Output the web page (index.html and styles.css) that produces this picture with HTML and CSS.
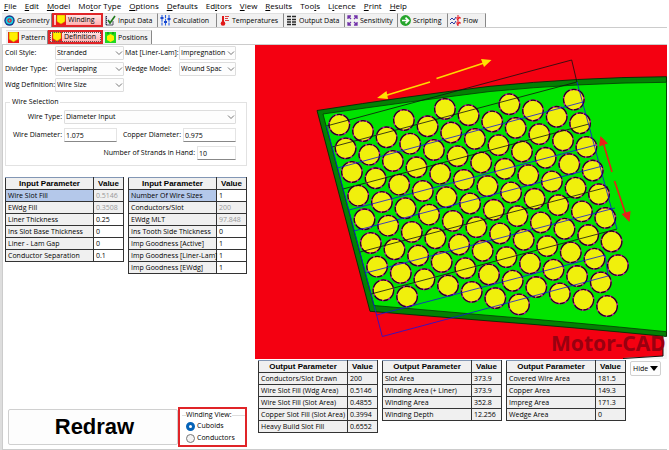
FILE: index.html
```
<!DOCTYPE html>
<html lang="en">
<head>
<meta charset="utf-8">
<title>Motor-CAD</title>
<link rel="stylesheet" href="styles.css">
</head>
<body>
<svg class="defs" aria-hidden="true">
  <defs>
    <symbol id="chevron" viewBox="0 0 8 8"><path d="M1 2.500 4 5.500 7 2.500" fill="none" stroke="#666" stroke-width=".9"/></symbol>
    <symbol id="slot" viewBox="0 0 10 10"><rect width="10" height="10" fill="#f01818"/><path d="M1 0h8v6.500L5 9 1 6.500z" fill="#fff000" stroke="#b89000" stroke-width=".5"/></symbol>
  </defs>
</svg>

<nav class="menu">
  <a href="#"><u>F</u>ile</a>
  <a href="#"><u>E</u>dit</a>
  <a href="#"><u>M</u>odel</a>
  <a href="#">Mo<u>t</u>or Type</a>
  <a href="#"><u>O</u>ptions</a>
  <a href="#"><u>D</u>efaults</a>
  <a href="#">Ed<u>i</u>tors</a>
  <a href="#"><u>V</u>iew</a>
  <a href="#"><u>R</u>esults</a>
  <a href="#">Too<u>l</u>s</a>
  <a href="#">L<u>i</u>cence</a>
  <a href="#"><u>P</u>rint</a>
  <a href="#"><u>H</u>elp</a>
</nav>

<div class="tabs tabs-main" role="tablist">
  <button class="tab" role="tab"><svg viewBox="0 0 11 11"><circle cx="5.500" cy="5.500" r="5.200" fill="#173a8c"/><circle cx="5.500" cy="5.500" r="3.800" fill="#12d8e8"/><circle cx="5.500" cy="5.500" r="2.200" fill="#e02030"/><circle cx="5.500" cy="5.500" r=".9" fill="#12d8e8"/></svg>Geometry</button>
  <button class="tab marked" role="tab" aria-selected="true"><svg><use href="#slot"/></svg>Winding</button>
  <button class="tab" role="tab"><svg viewBox="0 0 11 11"><path d="M1 1v9h7V6" fill="#e8e8f4" stroke="#556" /><path d="M1.500 1v9" stroke="#335" stroke-dasharray="1 1"/><path d="m3 5 2 3 5-7" fill="none" stroke="#207818" stroke-width="1.600"/></svg>Input Data</button>
  <button class="tab" role="tab"><svg viewBox="0 0 11 11"><path d="M2 0v11M5.500 0v11M9 0v11" stroke="#2860e0" stroke-width="1.100" stroke-dasharray="3 .7"/><path d="M.5 3h3M4 7h3M7.500 4h3" stroke="#1848d0" stroke-width="2"/></svg>Calculation</button>
  <button class="tab" role="tab"><svg viewBox="0 0 11 11"><path d="M4 1v7" stroke="#e01818" stroke-width="2"/><circle cx="4" cy="8.500" r="2.300" fill="#e01818"/><path d="M6 1.500h4M6 3.500h3M6 5.500h4" stroke="#e04040"/></svg>Temperatures</button>
  <button class="tab" role="tab"><svg viewBox="0 0 11 11"><path d="M1 1.500h9M1 4.500h9M1 7h9M1 9.500h9" stroke="#282828" stroke-width="1.300" stroke-dasharray="4 1"/></svg>Output Data</button>
  <button class="tab" role="tab"><svg viewBox="0 0 11 11"><path d="M1 4V1h3M7 1h3v3M10 7v3H7M4 10H1V7M1 1l3 3M10 1 7 4M10 10 7 7M1 10l3-3" fill="none" stroke="#7030a8" stroke-width="1.300"/></svg>Sensitivity</button>
  <button class="tab" role="tab"><svg viewBox="0 0 11 11"><circle cx="5.500" cy="5.500" r="5.400" fill="#26a52c"/><path d="M2 5.500h6M5.500 2.600l3 2.900-3 2.900" fill="none" stroke="#fff" stroke-width="1.700"/></svg>Scripting</button>
  <button class="tab" role="tab"><svg viewBox="0 0 11 11"><path d="m0 5 2-2 2 2 2-3M0 9l2-2 2 2 2-3" fill="none" stroke="#2838a0"/><path d="M8 0v11M6 3h5M6 8h5M7 5l3-3M7 10l3-3" stroke="#e82028" stroke-width="1.100"/></svg>Flow</button>
</div>

<div class="page">
  <div class="tabs tabs-sub" role="tablist">
    <button class="tab" role="tab"><svg><use href="#slot"/></svg>Pattern</button>
    <button class="tab marked focus" role="tab" aria-selected="true"><svg><use href="#slot"/></svg>Definition</button>
    <button class="tab" role="tab"><svg viewBox="0 0 11 11"><rect width="11" height="11" fill="#20d820"/><path d="M2 4 5.500 2 9 4v4L5.500 10 2 8z" fill="#fff000"/><path d="M2 1h2M7 1h2" stroke="#087808"/></svg>Positions</button>
  </div>

  <main class="work">
    <section class="side">
      <form class="options">
        <label for="coil">Coil Style:</label>
        <span class="pick"><select id="coil"><option>Stranded</option></select><svg><use href="#chevron"/></svg></span>
        <label for="mat">Mat [Liner-Lam]:</label>
        <span class="pick"><select id="mat"><option>Impregnation</option></select><svg><use href="#chevron"/></svg></span>
        <label for="divider">Divider Type:</label>
        <span class="pick"><select id="divider"><option>Overlapping</option></select><svg><use href="#chevron"/></svg></span>
        <label for="wedge">Wedge Model:</label>
        <span class="pick"><select id="wedge"><option>Wound Spac</option></select><svg><use href="#chevron"/></svg></span>
        <label for="wdg">Wdg Definition:</label>
        <span class="pick"><select id="wdg"><option>Wire Size</option></select><svg><use href="#chevron"/></svg></span>
      </form>

      <fieldset class="wire">
        <legend>Wire Selection</legend>
        <div class="wire-row">
          <label class="lead" for="wtype">Wire Type:</label>
          <span class="pick grow"><select id="wtype"><option>Diameter Input</option></select><svg><use href="#chevron"/></svg></span>
        </div>
        <div class="wire-row">
          <label class="lead" for="wdia">Wire Diameter:</label>
          <input id="wdia" value="1.075">
          <label class="push" for="cdia">Copper Diameter:</label>
          <input id="cdia" value="0.975">
        </div>
        <div class="wire-row">
          <label class="push" for="strands">Number of Strands in Hand:</label>
          <input class="short" id="strands" value="10">
        </div>
      </fieldset>

      <div class="inputs">
        <table>
          <thead><tr><th>Input Parameter</th><th class="val">Value</th></tr></thead>
          <tbody>
            <tr><td class="sel">Wire Slot Fill</td><td class="off">0.5146</td></tr>
            <tr><td>EWdg Fill</td><td class="off">0.3508</td></tr>
            <tr><td>Liner Thickness</td><td class="edit">0.25</td></tr>
            <tr><td>Ins Slot Base Thickness</td><td class="edit">0</td></tr>
            <tr><td>Liner - Lam Gap</td><td class="edit">0</td></tr>
            <tr><td>Conductor Separation</td><td class="edit">0.1</td></tr>
          </tbody>
        </table>
        <table>
          <thead><tr><th>Input Parameter</th><th class="val">Value</th></tr></thead>
          <tbody>
            <tr><td class="sel">Number Of Wire Sizes</td><td class="edit">1</td></tr>
            <tr><td>Conductors/Slot</td><td class="off">200</td></tr>
            <tr><td>EWdg MLT</td><td class="off">97.848</td></tr>
            <tr><td>Ins Tooth Side Thickness</td><td class="edit">0</td></tr>
            <tr><td>Imp Goodness [Active]</td><td class="edit">1</td></tr>
            <tr><td>Imp Goodness [Liner-Lam]</td><td class="edit">1</td></tr>
            <tr><td>Imp Goodness [EWdg]</td><td class="edit">1</td></tr>
          </tbody>
        </table>
      </div>

      <div class="actions">
        <button class="redraw">Redraw</button>
        <div class="view-mark">
          <fieldset class="view">
            <legend>Winding View:</legend>
            <label><input type="radio" name="view" checked>Cuboids</label>
            <label><input type="radio" name="view">Conductors</label>
          </fieldset>
        </div>
      </div>
    </section>

    <section class="result">
      <svg class="drawing" viewBox="255 45 412 314" role="img" aria-label="Slot cross-section">
        <defs>
          <g id="wireEnd">
            <circle r="10.300" fill="#f0f00c" stroke="#c010a0" stroke-width="1.300"/>
            <circle r="10.300" fill="none" stroke="#200818" stroke-width="1.300" stroke-dasharray="9 2 5 1.500"/>
          </g>
          <g id="c7">
            <use href="#wireEnd"/>
            <use href="#wireEnd" x="6.300" y="23.650"/>
            <use href="#wireEnd" x="12.600" y="47.300"/>
            <use href="#wireEnd" x="18.900" y="70.950"/>
            <use href="#wireEnd" x="25.200" y="94.600"/>
            <use href="#wireEnd" x="31.500" y="118.250"/>
            <use href="#wireEnd" x="37.800" y="141.900"/>
          </g>
          <g id="c8"><use href="#c7"/><use href="#wireEnd" x="44.100" y="165.550"/></g>
          <g id="c9"><use href="#c8"/><use href="#wireEnd" x="50.400" y="189.200"/></g>
        </defs>
        <rect x="255" y="45" width="412" height="314" fill="#f40011"/>
        <path d="M663 336h4v23h-44v-1l40-2z" fill="#f4f4f4"/>
        <path d="M317 110.500Q410 96 490 86.300Q577 77.500 666.500 76.700V336.500Q570 327 490 321L370 311.300z" fill="#048004" stroke="#052805" stroke-width=".9"/>
        <path d="M323 114Q410 101.500 490 91.500Q577 83 666.500 82.300V331.700Q570 322 490 315.500L374 305.500z" fill="#00e400" stroke="#053805" stroke-width=".8"/>
        <path d="M663 337v19l-40 2.500" fill="none" stroke="#111"/>
        <use href="#c8" x="339.300" y="124.700"/>
        <use href="#c8" x="363" y="131"/>
        <use href="#c7" x="386.600" y="137.300"/>
        <use href="#c8" x="403.900" y="120"/>
        <use href="#c8" x="427.600" y="126.300"/>
        <use href="#c9" x="444.900" y="108.900"/>
        <use href="#c9" x="468.600" y="115.200"/>
        <use href="#c8" x="492.200" y="121.500"/>
        <use href="#c9" x="509.400" y="104.200"/>
        <use href="#c9" x="533" y="110.500"/>
        <use href="#c9" x="556.700" y="116.800"/>
        <use href="#c8" x="573.800" y="99.600"/>
        <g fill="none" stroke-width=".8">
          <path stroke="#101010" d="M326.500 126 571.700 60l5.200 22L332 147M343 189 589 124M360 252 608 187M371 294 617 229"/>
          <path stroke="#1414e0" d="M337.600 168 583 102M349 210 596 145M354 231 602.700 166M365.500 273 615 208M376.700 315 605 255l3 21L382.300 336.500 326.500 126M577 82 617 229"/>
        </g>
        <g stroke-width="1.600">
          <path d="M430 82 384 96M436.500 78.500 484 63" stroke="#ffd800"/>
          <path d="M377 98 386.500 91 388 99zM491.500 60 481 59l3 8z" fill="#ffe000"/>
          <path d="M612 172 603 142M614.500 181 626 215" stroke="#e82018"/>
          <path d="M600.500 136 599 146.500l9-3zM629.500 222 621.500 214l9-3z" fill="#e82018"/>
        </g>
        <text class="brand" x="551" y="351">Motor-CAD</text>
      </svg>

      <div class="outputs">
        <table>
          <thead><tr><th>Output Parameter</th><th class="val">Value</th></tr></thead>
          <tbody>
            <tr><td>Conductors/Slot Drawn</td><td>200</td></tr>
            <tr><td>Wire Slot Fill (Wdg Area)</td><td>0.5146</td></tr>
            <tr><td>Wire Slot Fill (Slot Area)</td><td>0.4855</td></tr>
            <tr><td>Copper Slot Fill (Slot Area)</td><td>0.3994</td></tr>
            <tr><td>Heavy Build Slot Fill</td><td>0.6552</td></tr>
          </tbody>
        </table>
        <table>
          <thead><tr><th>Output Parameter</th><th class="val">Value</th></tr></thead>
          <tbody>
            <tr><td>Slot Area</td><td>373.9</td></tr>
            <tr><td>Winding Area (+ Liner)</td><td>373.9</td></tr>
            <tr><td>Winding Area</td><td>352.8</td></tr>
            <tr><td>Winding Depth</td><td>12.256</td></tr>
          </tbody>
        </table>
        <table>
          <thead><tr><th>Output Parameter</th><th class="val">Value</th></tr></thead>
          <tbody>
            <tr><td>Covered Wire Area</td><td>181.5</td></tr>
            <tr><td>Copper Area</td><td>149.3</td></tr>
            <tr><td>Impreg Area</td><td>171.3</td></tr>
            <tr><td>Wedge Area</td><td>0</td></tr>
          </tbody>
        </table>
        <button class="hide">Hide <svg viewBox="0 0 8 5"><path d="M0 0h8L4 5z"/></svg></button>
      </div>
    </section>
  </main>
</div>
</body>
</html>
```
FILE: styles.css
```
* { box-sizing: border-box; }

body {
  margin: 0;
  min-height: 100vh;
  display: flex;
  flex-direction: column;
  background: #fff;
  color: #000;
  font: 7px/10px "Open Sans", "Noto Sans", sans-serif;
}

button, input, select { font: inherit; color: inherit; }

.defs { position: absolute; width: 0; height: 0; }

/* Menu bar */
.menu {
  display: flex;
  gap: 8px;
  height: 13px;
  padding: 0 4px;
  font: 8px/11px "Open Sans", "Noto Sans", sans-serif;
}
.menu a { color: #000; text-decoration: none; white-space: nowrap; }
.menu u { text-underline-offset: 1px; }

/* Tab strips */
.tabs { display: grid; background: #fff; }
.tabs-main {
  grid-template-columns: 50px 51px 55px 59px 67px 61px 53px 50px 38px;
  height: 14px;
  padding-left: 2px;
}
.tabs-sub {
  grid-template-columns: 42px 55px 49px;
  height: 14px;
  padding-left: 4px;
}
.tab {
  display: flex;
  align-items: center;
  gap: 2px;
  min-width: 0;
  padding: 0 2px;
  border: 0;
  border-top: 1px solid #e0e0e0;
  border-right: 1px solid #888;
  background: #f1f1f1;
  white-space: nowrap;
}
.tab svg { flex: none; width: 11px; height: 11px; }
.tab.marked {
  border: 2px solid #e02428;
  background: linear-gradient(#ffe4e4, #ffb0b0);
}
.tab.marked svg { width: 10px; height: 10px; }
.tab.focus { outline: 1px dotted #555; outline-offset: -3px; }

.page {
  flex: 1;
  display: flex;
  flex-direction: column;
  margin-right: 2px;
  padding-top: 2px;
  border-top: 1px solid #ccc;
  border-left: 2px solid #ddd;
}
.work {
  flex: 1;
  display: flex;
  border: 1px solid #ccc;
  border-width: 1px 0 1px 1px;
}

/* Settings column */
.side {
  flex: 0 0 252px;
  display: flex;
  flex-direction: column;
  padding: 1px 8px 2px 2px;
}
.options {
  display: grid;
  grid-template-columns: 49px 69px 53px 57px;
  gap: 2px 1px;
  align-items: center;
}
label { white-space: nowrap; }
.pick { position: relative; display: flex; height: 14px; }
.pick select {
  appearance: none;
  width: 100%;
  padding: 0 9px 0 1px;
  border: 1px solid #ddd;
  border-radius: 1px;
  background: #fdfdfd;
}
.pick svg {
  position: absolute;
  right: 1px;
  top: 3px;
  width: 8px;
  height: 8px;
  pointer-events: none;
}

.wire {
  display: flex;
  flex-direction: column;
  gap: 4px;
  min-width: 0;
  margin: 5px 0 0;
  padding: 3px 10px 5px 4px;
  border: 1px solid #e2e2e2;
}
.wire legend { margin-left: 0; padding: 0 2px; }
.wire-row { display: flex; align-items: center; gap: 2px; height: 14px; }
.wire .lead { width: 52px; text-align: right; }
.wire .grow { flex: 1; }
.wire .push { margin-left: auto; }
.wire input {
  width: 53px;
  height: 14px;
  padding: 0 1px;
  border: 1px solid #e4e4e4;
  border-bottom-color: #888;
  background: #fff;
}
.wire .short { width: 39px; }

/* Parameter tables */
table {
  flex: 0 0 auto;
  width: 119px;
  table-layout: fixed;
  border-collapse: collapse;
  border: 1px solid #8296b4;
}
th, td {
  height: 12px;
  padding: 0 0 0 2px;
  border: 1px solid #333;
  background: #f0f0f0;
  line-height: 10px;
  text-align: left;
  white-space: nowrap;
}
th {
  padding: 0;
  border-top-color: #8296b4;
  font-family: "Liberation Sans", Arial, sans-serif;
  font-size: 8px;
  text-align: center;
}
.val { width: 30px; }
.sel { background: #b4c8ea; }
.off { color: #999; }
.edit { background: #fff; }
.inputs {
  display: flex;
  align-items: flex-start;
  justify-content: space-between;
  margin-top: 11px;
}

.actions { display: flex; align-items: center; margin-top: auto; padding-left: 3px; }
.redraw {
  flex: 1;
  height: 36px;
  padding: 0 0 0 3px;
  border: 1px solid #d0d0d0;
  border-radius: 2px;
  background: #fdfdfd;
  font: bold 22px "Liberation Sans", Arial, sans-serif;
  color: #000;
}
.view-mark { width: 69px; height: 40px; border: 2px solid #e02428; padding: 1px 0 0 2px; }
.view { min-width: 0; margin: 0; padding: 0 0 0 4px; border: 0; border-top: 1px solid #ddd; }
.view legend { padding: 0; }
.view label { display: flex; align-items: center; gap: 2px; height: 12px; }
.view input {
  appearance: none;
  width: 9px;
  height: 9px;
  margin: 0;
  border: 1px solid #777;
  border-radius: 50%;
  background: #f4f4f4;
}
.view input:checked { border: 3px solid #0563b8; background: #fff; }

/* Drawing and results */
.result { flex: 1; min-width: 0; display: flex; flex-direction: column; }
.drawing { display: block; width: 100%; }
.brand { font: bold 21px "Noto Sans", "Open Sans", sans-serif; fill: #980010; }
.outputs { display: flex; align-items: flex-start; gap: 4px; padding: 1px 3px; }
.outputs table { width: 120px; }
.hide {
  display: flex;
  align-items: center;
  gap: 2px;
  height: 15px;
  margin-top: 1px;
  padding: 0 2px;
  border: 1px solid #d0d0d0;
  border-radius: 2px;
  background: #fdfdfd;
}
.hide svg { width: 8px; height: 5px; }
```
